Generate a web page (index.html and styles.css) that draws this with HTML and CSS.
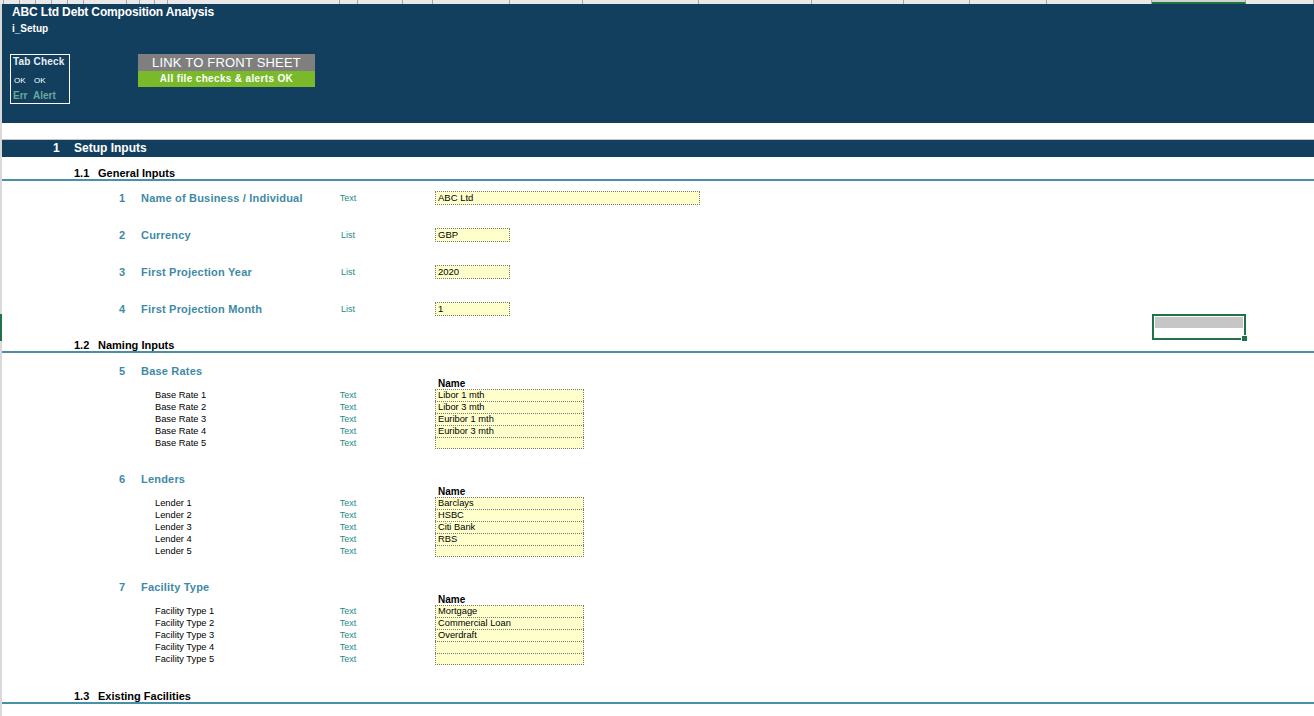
FILE: index.html
```html
<!DOCTYPE html>
<html>
<head>
<meta charset="utf-8">
<title>i_Setup</title>
<link rel="stylesheet" href="styles.css">
</head>
<body>
<div class="sheet">
  <div class="colhdr">
    <span></span><span></span><span></span><span></span><span></span><span></span><span></span><span></span><span></span><span></span><span></span><span></span><span></span><span></span><span></span><span></span><span></span><span></span><span></span><span></span><span></span><span></span><span class="sel"></span><span></span>
  </div>
  <div class="body">
    <header class="top">
      <div class="title">ABC Ltd Debt Composition Analysis</div>
      <div class="tabname">i_Setup</div>
      <div class="toprow">
        <div class="tabcheck">
          <div class="tc-title">Tab Check</div>
          <div class="tc-ok"><span>OK</span><span>OK</span></div>
          <div class="tc-err"><span>Err</span><span>Alert</span></div>
        </div>
        <div class="link">
          <div class="link-top">LINK TO FRONT SHEET</div>
          <div class="link-bot">All file checks &amp; alerts OK</div>
        </div>
      </div>
    </header>

    <div class="band"><span class="band-num">1</span><span>Setup Inputs</span></div>

    <div class="sub first"><span class="sub-num">1.1</span><span>General Inputs</span></div>
    <div class="item first"><span class="num">1</span><span class="label">Name of Business / Individual</span><span class="type">Text</span><span class="input wide">ABC Ltd</span></div>
    <div class="item"><span class="num">2</span><span class="label">Currency</span><span class="type">List</span><span class="input short">GBP</span></div>
    <div class="item"><span class="num">3</span><span class="label">First Projection Year</span><span class="type">List</span><span class="input short">2020</span></div>
    <div class="item"><span class="num">4</span><span class="label">First Projection Month</span><span class="type">List</span><span class="input short">1</span></div>

    <div class="sub s12"><span class="sub-num">1.2</span><span>Naming Inputs</span></div>

    <div class="group g-first">
      <div class="gtitle"><span class="num">5</span><span class="label">Base Rates</span></div>
      <div class="namehdr">Name</div>
      <div class="lrow"><span class="sublabel">Base Rate 1</span><span class="type">Text</span><span class="cell">Libor 1 mth</span></div>
      <div class="lrow"><span class="sublabel">Base Rate 2</span><span class="type">Text</span><span class="cell">Libor 3 mth</span></div>
      <div class="lrow"><span class="sublabel">Base Rate 3</span><span class="type">Text</span><span class="cell">Euribor 1 mth</span></div>
      <div class="lrow"><span class="sublabel">Base Rate 4</span><span class="type">Text</span><span class="cell">Euribor 3 mth</span></div>
      <div class="lrow"><span class="sublabel">Base Rate 5</span><span class="type">Text</span><span class="cell last"></span></div>
    </div>

    <div class="group">
      <div class="gtitle"><span class="num">6</span><span class="label">Lenders</span></div>
      <div class="namehdr">Name</div>
      <div class="lrow"><span class="sublabel">Lender 1</span><span class="type">Text</span><span class="cell">Barclays</span></div>
      <div class="lrow"><span class="sublabel">Lender 2</span><span class="type">Text</span><span class="cell">HSBC</span></div>
      <div class="lrow"><span class="sublabel">Lender 3</span><span class="type">Text</span><span class="cell">Citi Bank</span></div>
      <div class="lrow"><span class="sublabel">Lender 4</span><span class="type">Text</span><span class="cell">RBS</span></div>
      <div class="lrow"><span class="sublabel">Lender 5</span><span class="type">Text</span><span class="cell last"></span></div>
    </div>

    <div class="group">
      <div class="gtitle"><span class="num">7</span><span class="label">Facility Type</span></div>
      <div class="namehdr">Name</div>
      <div class="lrow"><span class="sublabel">Facility Type 1</span><span class="type">Text</span><span class="cell">Mortgage</span></div>
      <div class="lrow"><span class="sublabel">Facility Type 2</span><span class="type">Text</span><span class="cell">Commercial Loan</span></div>
      <div class="lrow"><span class="sublabel">Facility Type 3</span><span class="type">Text</span><span class="cell">Overdraft</span></div>
      <div class="lrow"><span class="sublabel">Facility Type 4</span><span class="type">Text</span><span class="cell"></span></div>
      <div class="lrow"><span class="sublabel">Facility Type 5</span><span class="type">Text</span><span class="cell last"></span></div>
    </div>

    <div class="sub s13"><span class="sub-num">1.3</span><span>Existing Facilities</span></div>
  </div>

  <div class="rowmark"></div>
  <div class="selection"><div class="sel-fill"></div><div class="sel-handle"></div></div>
</div>
</body>
</html>
```

FILE: styles.css
```css
html, body {
  margin: 0;
  padding: 0;
  background: #ffffff;
}

body {
  font-family: "Liberation Sans", Arial, sans-serif;
  color: #000;
}

.sheet {
  position: relative;
  width: 1314px;
  height: 716px;
  overflow: hidden;
  background: #ffffff;
}

/* column header remnant strip */
.colhdr {
  display: grid;
  grid-template-columns: 4px 16px 16px 16px 16px 16px 43px 13px 15px 13px 172px 18px 45px 30px 77px 73px 116px 113px 92px 66px 77px 105px 94px 1fr;
  height: 4px;
  background: #e9e9e9;
}

.colhdr span {
  border-right: 1px solid #a6a6a6;
}

.colhdr .sel {
  background: #d2d2d2;
  border-bottom: 2px solid #217346;
  box-sizing: border-box;
}

.body {
  border-left: 2px solid #d9d9d9;
  height: 712px;
}

/* top banner */
.top {
  background: #133f5f;
  height: 119px;
  padding-left: 10px;
  color: #ffffff;
  box-sizing: border-box;
}

.title {
  font-weight: bold;
  font-size: 12px;
  line-height: 16px;
  letter-spacing: -0.15px;
}

.tabname {
  font-weight: bold;
  font-size: 10px;
  line-height: 17px;
}

.toprow {
  display: flex;
  align-items: flex-start;
  margin-top: 17px;
  margin-left: -2px;
  gap: 68px;
}

.tabcheck {
  width: 60px;
  height: 50px;
  border: 1px solid #ffffff;
  box-sizing: border-box;
  padding-left: 2px;
}

.tc-title {
  font-weight: bold;
  font-size: 10px;
  line-height: 14px;
  letter-spacing: 0.2px;
  color: #e6eef4;
}

.tc-ok {
  margin-top: 5px;
  font-size: 8px;
  line-height: 14px;
  padding-left: 1px;
  color: #ffffff;
}

.tc-ok span:first-child {
  display: inline-block;
  width: 20px;
}

.tc-err {
  font-weight: bold;
  font-size: 10px;
  line-height: 15px;
  color: #6aa89c;
}

.tc-err span:first-child {
  display: inline-block;
  width: 20px;
}

.link {
  width: 177px;
  text-align: center;
}

.link-top {
  background: #7f7f7f;
  height: 17px;
  line-height: 17px;
  font-size: 13px;
  letter-spacing: 0.2px;
  color: #ffffff;
}

.link-bot {
  background: #7ab929;
  height: 16px;
  line-height: 16px;
  font-size: 10px;
  letter-spacing: 0.35px;
  font-weight: bold;
  color: #ffffff;
}

/* section band */
.band {
  display: flex;
  margin-top: 16px;
  border-top: 1px solid #c4c4c4;
  height: 17px;
  line-height: 17px;
  background: #133f5f;
  color: #ffffff;
  font-weight: bold;
  font-size: 12px;
  padding-left: 51px;
}

.band-num {
  width: 21px;
}

/* sub headings */
.sub {
  display: flex;
  height: 24px;
  box-sizing: border-box;
  padding-top: 9px;
  padding-left: 72px;
  line-height: 14px;
  font-size: 11px;
  font-weight: bold;
  border-bottom: 2px solid #4a8fa8;
}

.sub-num {
  width: 24px;
}

.s12 {
  margin-top: 13px;
}

.s13 {
  margin-top: 15px;
}

/* general input rows */
.item {
  display: flex;
  align-items: center;
  height: 14px;
  margin-top: 23px;
  padding-left: 117px;
}

.item.first {
  margin-top: 10px;
}

.num {
  width: 22px;
  flex: none;
  font-weight: bold;
  font-size: 11px;
  color: #3e8aa6;
}

.label {
  width: 180px;
  flex: none;
  font-weight: bold;
  font-size: 11px;
  letter-spacing: 0.2px;
  color: #3e8aa6;
  white-space: nowrap;
}

.type {
  width: 54px;
  flex: none;
  text-align: center;
  font-size: 9px;
  color: #1e8a87;
}

.input {
  margin-left: 60px;
  height: 14px;
  box-sizing: border-box;
  border: 1px dotted #7a7a7a;
  background: #ffffcc;
  font-size: 9.5px;
  line-height: 12px;
  padding-left: 2px;
  white-space: nowrap;
}

.input.wide {
  width: 265px;
}

.input.short {
  width: 75px;
}

/* naming groups */
.group {
  margin-top: 24px;
}

.group.g-first {
  margin-top: 12px;
}

.gtitle {
  display: flex;
  align-items: center;
  height: 12px;
  padding-left: 117px;
}

.namehdr {
  height: 12px;
  line-height: 13px;
  padding-left: 436px;
  font-size: 10px;
  font-weight: bold;
}

.lrow {
  display: flex;
  align-items: stretch;
  height: 12px;
  padding-left: 153px;
  line-height: 12px;
}

.sublabel {
  width: 166px;
  flex: none;
  font-size: 9.3px;
  white-space: nowrap;
}

.lrow .type {
  line-height: 12px;
}

.cell {
  margin-left: 60px;
  width: 149px;
  height: 12px;
  box-sizing: border-box;
  border-left: 1px dotted #7a7a7a;
  border-right: 1px dotted #7a7a7a;
  border-top: 1px dotted #7a7a7a;
  background: #ffffcc;
  font-size: 9.3px;
  line-height: 10px;
  padding-left: 2px;
  white-space: nowrap;
}

.cell.last {
  border-bottom: 1px dotted #7a7a7a;
}

/* overlays: selected row marker and selected cell */
.rowmark {
  position: absolute;
  left: 0;
  top: 314px;
  width: 2px;
  height: 27px;
  background: #217346;
}

.selection {
  position: absolute;
  left: 1152px;
  top: 314px;
  width: 94px;
  height: 26px;
  box-sizing: border-box;
  border: 2px solid #217346;
}

.sel-fill {
  margin: 1px 1px 0 1px;
  height: 11px;
  background: #c6c6c6;
}

.sel-handle {
  position: absolute;
  right: -4px;
  bottom: -4px;
  width: 5px;
  height: 5px;
  background: #217346;
  border: 1px solid #ffffff;
}
```
